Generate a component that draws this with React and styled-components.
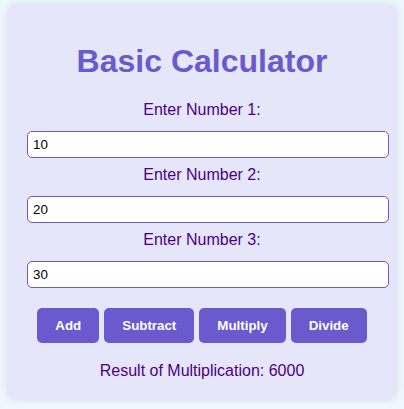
import React, { useState } from 'react';
import styled, { createGlobalStyle } from 'styled-components';

const GlobalStyle = createGlobalStyle`
body {
    margin: 0;
    background-color: #f0f8ff;
    font-family: "Liberation Sans", Arial, sans-serif;
}
`

const Card = styled.div`
width: 350px;
margin: 4px 7px;
padding: 20px;
background-color: #e6e6fa;
border-radius: 10px;
box-shadow: 0 0 10px rgba(0, 0, 0, 0.1);
text-align: center;
`

const Title = styled.h1`
margin: 19px 0 21px;
font-size: 32px;
font-weight: bold;
color: #6a5acd;
`

const Label = styled.label`
display: block;
margin: 8px 0 12px;
font-size: 16px;
color: #4b0082;
`

const Input = styled.input`
display: block;
width: 100%;
margin: 0;
padding: 5px;
border: 1px solid #6a5acd;
border-radius: 5px;
background: #fff;
font-family: "Liberation Sans", Arial, sans-serif;
font-size: 13.333px;
color: #000;
outline: none;
`

const ButtonRow = styled.div`
display: flex;
justify-content: center;
gap: 5px;
margin-top: 20px;
`

const Button = styled.button`
padding: 10px 18px;
border: none;
border-radius: 5px;
background-color: #6a5acd;
color: #fff;
font-family: "Liberation Sans", Arial, sans-serif;
font-size: 13.333px;
font-weight: bold;
cursor: pointer;
`

const Result = styled.p`
margin: 19px 0 0;
font-size: 16px;
color: #4b0082;
`

const ops = {
    Add: ['Addition', (a, b, c) => a + b + c],
    Subtract: ['Subtraction', (a, b, c) => a - b - c],
    Multiply: ['Multiplication', (a, b, c) => a * b * c],
    Divide: ['Division', (a, b, c) => a / b / c],
}

export default function App() {
    const [nums, setNums] = useState(['10', '20', '30'])
    const [result, setResult] = useState({ name: 'Multiplication', value: 6000 })

    const update = (i, v) => {
        const next = [...nums]
        next[i] = v
        setNums(next)
    }

    const run = (key) => {
        const [name, fn] = ops[key]
        const [a, b, c] = nums.map(Number)
        setResult({ name, value: fn(a, b, c) })
    }

    return (
        <>
            <GlobalStyle />
            <Card>
                <Title>Basic Calculator</Title>
                {nums.map((n, i) => (
                    <React.Fragment key={i}>
                        <Label htmlFor={`num${i}`}>Enter Number {i + 1}:</Label>
                        <Input id={`num${i}`} type="text" value={n} onChange={e => update(i, e.target.value)} />
                    </React.Fragment>
                ))}
                <ButtonRow>
                    {Object.keys(ops).map(k => (
                        <Button key={k} onClick={() => run(k)}>{k}</Button>
                    ))}
                </ButtonRow>
                <Result>Result of {result.name}: {result.value}</Result>
            </Card>
        </>
    )
}
